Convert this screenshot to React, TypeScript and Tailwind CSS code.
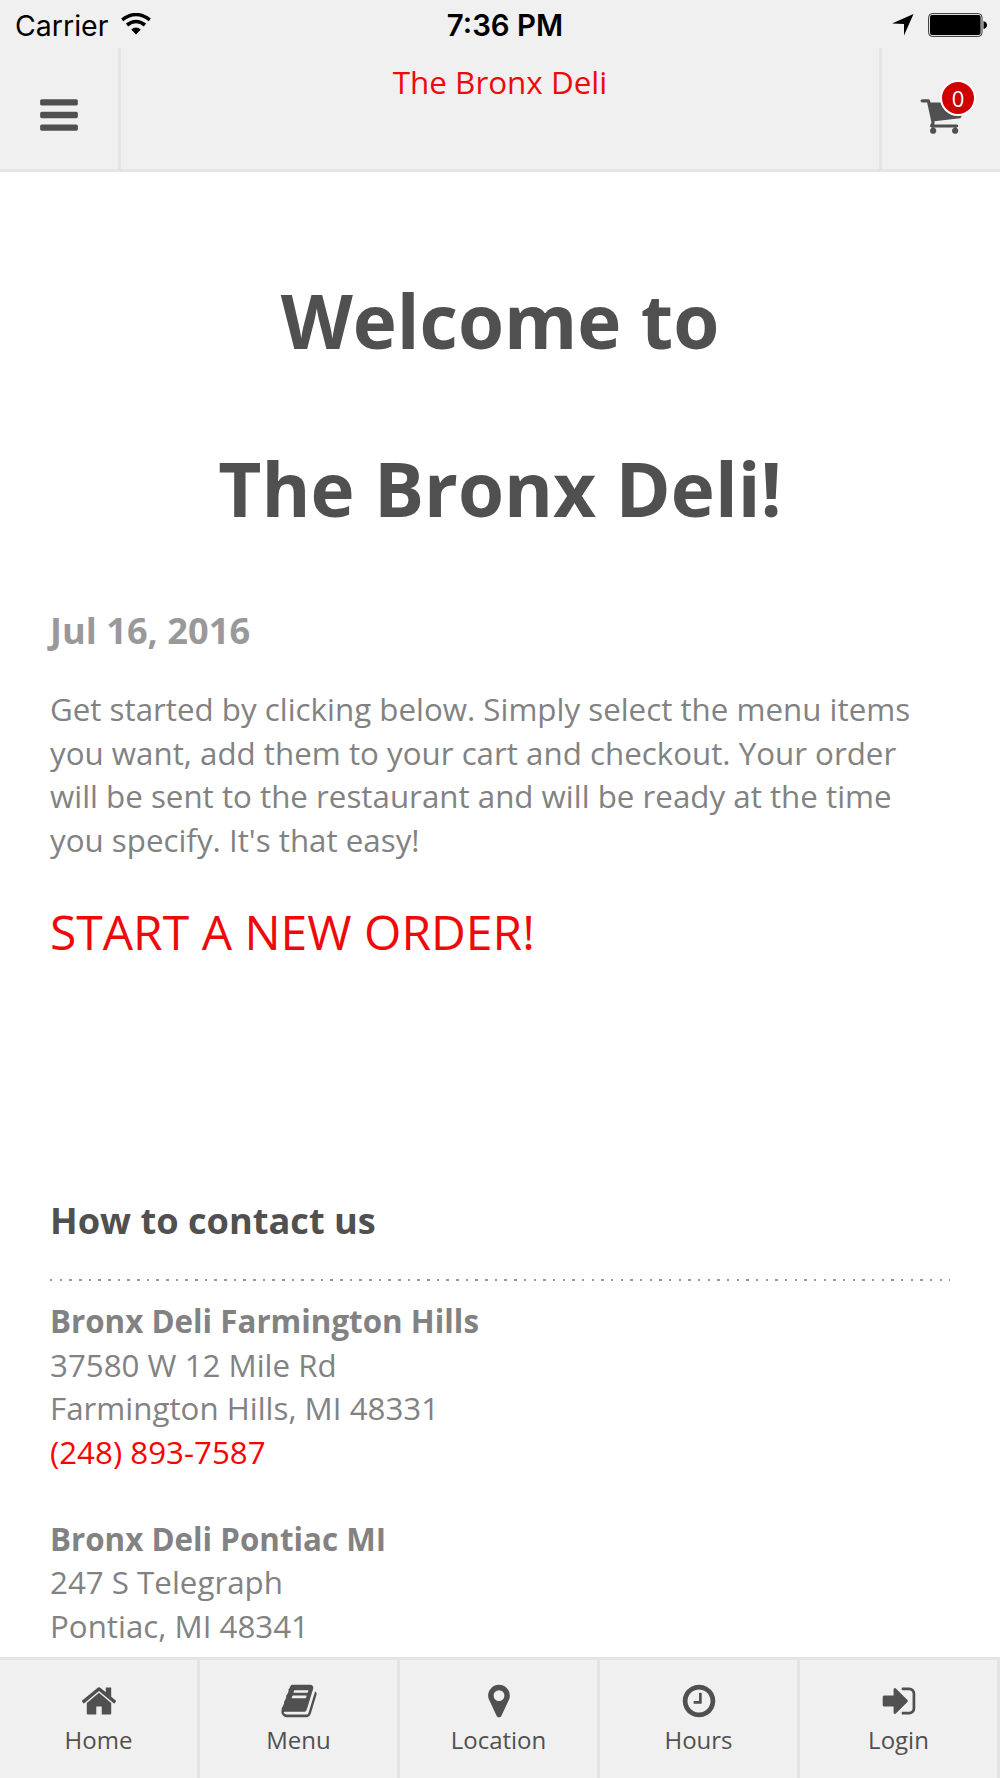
const icons = {
  bars: "M1664 1344v128q0 26-19 45t-45 19h-1408q-26 0-45-19t-19-45v-128q0-26 19-45t45-19h1408q26 0 45 19t19 45zm0-512v128q0 26-19 45t-45 19h-1408q-26 0-45-19t-19-45v-128q0-26 19-45t45-19h1408q26 0 45 19t19 45zm0-512v128q0 26-19 45t-45 19h-1408q-26 0-45-19t-19-45v-128q0-26 19-45t45-19h1408q26 0 45 19t19 45z",
  cart: "M704 1536q0 52-38 90t-90 38-90-38-38-90 38-90 90-38 90 38 38 90zm896 0q0 52-38 90t-90 38-90-38-38-90 38-90 90-38 90 38 38 90zm128-1088v512q0 24-16.5 42.5t-40.5 21.5l-1044 122q13 60 13 70 0 16-24 64h920q26 0 45 19t19 45-19 45-45 19h-1024q-26 0-45-19t-19-45q0-11 8-31.5t16-36 21.5-40 15.5-29.5l-177-823h-204q-26 0-45-19t-19-45 19-45 45-19h256q16 0 28.5 6.5t19.5 15.5 13 24.5 8 26 5.5 29.5 4.5 26h1201q26 0 45 19t19 45z",
  home: "M1472 992v480q0 26-19 45t-45 19h-384v-384h-256v384h-384q-26 0-45-19t-19-45v-480q0-1 .5-3t.5-3l575-474 575 474q1 2 1 6zm223-69l-62 74q-8 9-21 11h-3q-13 0-21-7l-692-577-692 577q-12 8-24 7-13-2-21-11l-62-74q-8-10-7-23.5t11-21.5l719-599q32-26 76-26t76 26l244 204v-195q0-14 9-23t23-9h192q14 0 23 9t9 23v408l219 182q10 8 11 21.5t-7 23.5z",
  book: "M1703 478q40 57 18 129l-275 906q-19 64-76.5 107.5t-122.5 43.5h-923q-77 0-148.5-53.5t-99.5-131.5q-24-67-2-127 0-4 3-27t4-37q1-8-3-21.5t-3-19.5q2-11 8-21t16.5-23.5 16.5-23.5q23-38 45-91.5t30-91.5q3-10 .5-30t-.5-28q3-11 17-28t17-23q21-36 42-92t25-90q1-9-2.5-32t.5-28q4-13 22-30.5t22-22.5q19-26 42.5-84.5t27.5-96.5q1-8-3-25.5t-2-26.5q2-8 9-18t18-23 17-21q8-12 16.5-30.5t15-35 16-36 19.5-32 26.5-23.5 36-11.5 47.5 5.5l-1 3q38-9 51-9h761q74 0 114 56t18 130l-274 906q-36 119-71.5 153.5t-128.5 34.5h-869q-27 0-38 15-11 16-1 43 24 70 144 70h923q29 0 56-15.5t35-41.5l300-987q7-22 5-57 38 15 59 43zm-1064 2q-4 13 2 22.5t20 9.5h608q13 0 25.5-9.5t16.5-22.5l21-64q4-13-2-22.5t-20-9.5h-608q-13 0-25.5 9.5t-16.5 22.5zm-83 256q-4 13 2 22.5t20 9.5h608q13 0 25.5-9.5t16.5-22.5l21-64q4-13-2-22.5t-20-9.5h-608q-13 0-25.5 9.5t-16.5 22.5z",
  marker: "M1152 640q0-106-75-181t-181-75-181 75-75 181 75 181 181 75 181-75 75-181zm256 0q0 109-33 179l-364 774q-16 33-47.5 52t-67.5 19-67.5-19-46.5-52l-365-774q-33-70-33-179 0-212 150-362t362-150 362 150 150 362z",
  clock: "M1024 544v448q0 14-9 23t-23 9h-320q-14 0-23-9t-9-23v-64q0-14 9-23t23-9h224v-352q0-14 9-23t23-9h64q14 0 23 9t9 23zm416 352q0-148-73-273t-198-198-273-73-273 73-198 198-73 273 73 273 198 198 273 73 273-73 198-198 73-273zm224 0q0 209-103 385.5t-279.5 279.5-385.5 103-385.5-103-279.5-279.5-103-385.5 103-385.5 279.5-279.5 385.5-103 385.5 103 279.5 279.5 103 385.5z",
  signIn: "M1312 896q0 26-19 45l-544 544q-19 19-45 19t-45-19-19-45v-288h-448q-26 0-45-19t-19-45v-384q0-26 19-45t45-19h448v-288q0-26 19-45t45-19 45 19l544 544q19 19 19 45zm352-352v704q0 119-84.5 203.5t-203.5 84.5h-320q-13 0-22.5-9.5t-9.5-22.5q0-4-1-20t-.5-26.5 3-23.5 10-19.5 20.5-6.5h320q66 0 113-47t47-113v-704q0-66-47-113t-113-47h-312l-11.5-1-11.5-3-8-5.5-7-9-2-13.5q0-4-1-20t-.5-26.5 3-23.5 10-19.5 20.5-6.5h320q119 0 203.5 84.5t84.5 203.5z",
};

function Icon({ name, size }: { name: keyof typeof icons; size: number }) {
  return (
    <svg width={size} height={size} viewBox="0 0 1792 1792" fill="currentColor" className="shrink-0">
      <path d={icons[name]} />
    </svg>
  );
}

const locations = [
  {
    name: "Bronx Deli Farmington Hills",
    street: "37580 W 12 Mile Rd",
    city: "Farmington Hills, MI 48331",
    phone: "(248) 893-7587",
  },
  {
    name: "Bronx Deli Pontiac MI",
    street: "247 S Telegraph",
    city: "Pontiac, MI 48341",
  },
];

const tabs: { label: string; icon: keyof typeof icons }[] = [
  { label: "Home", icon: "home" },
  { label: "Menu", icon: "book" },
  { label: "Location", icon: "marker" },
  { label: "Hours", icon: "clock" },
  { label: "Login", icon: "signIn" },
];

export default function App() {
  return (
    <div className="flex h-[1778px] w-[1000px] flex-col overflow-hidden bg-white font-['Open_Sans',sans-serif] text-[#828282]">
      {/* Status Bar */}
      <div className="grid h-12 shrink-0 grid-cols-3 items-center bg-[#f0f0f0] pt-1 pr-[13px] pl-[15px] font-['Inter',sans-serif] text-[28.5px] leading-[44px] text-black">
        <div className="flex items-center gap-[13px]">
          <span>Carrier</span>
          <svg width="30" height="22" viewBox="0 0 30 22" className="mb-1">
            <path d="M1.2 6.8Q15-3.6 28.8 6.8" fill="none" stroke="#000" strokeWidth="3.4" />
            <path d="M6 12Q15 5 24 12" fill="none" stroke="#000" strokeWidth="3.6" />
            <path d="M10.2 16.6Q15 12.2 19.8 16.6L15 21.4Z" />
          </svg>
        </div>
        <span className="pl-2 text-center text-[29.4px] font-semibold">7:36 PM</span>
        <div className="mb-0.5 flex items-center justify-end gap-3.5">
          <svg width="22" height="22" viewBox="0 0 22 22">
            <path d="M21.5 0L12 21.5V10L0 9.5Z" />
          </svg>
          <svg width="59" height="24" viewBox="0 0 59 24">
            <rect x="0.6" y="0.6" width="53.4" height="22.8" rx="3.6" fill="none" stroke="#333" />
            <rect x="2" y="2" width="50.6" height="20" rx="2" />
            <path d="M55.5 8q3.5 1 3.5 4t-3.5 4z" />
          </svg>
        </div>
      </div>

      {/* Header */}
      <header className="flex h-[124px] shrink-0 border-b-[3px] border-[#e4e4e4] bg-[#f0f0f0]">
        <button className="flex w-[121px] items-center justify-center border-r-[3px] border-[#e4e4e4] pt-3 text-[#505050]">
          <Icon name="bars" size={44} />
        </button>
        <div className="flex-1 pt-[11px] text-center text-[31.4px] leading-[45px] text-[#ee0a0a]">The Bronx Deli</div>
        <button className="flex w-[121px] items-center justify-center border-l-[3px] border-[#e4e4e4] pt-3 text-[#505050]">
          <span className="relative">
            <Icon name="cart" size={44} />
            <span className="absolute -top-[13px] left-[21px] flex size-9 items-center justify-center rounded-full border-2 border-white bg-[#d00000] text-[22px] leading-none text-white">
              0
            </span>
          </span>
        </button>
      </header>

      {/* Content */}
      <main className="flex-1 overflow-hidden px-[50px]">
        <h1 className="mt-[88px] text-center text-[74.6px] leading-[120px] font-bold text-[#505050]">Welcome to</h1>
        <h1 className="mt-12 text-center text-[74.6px] leading-[120px] font-bold text-[#505050]">The Bronx Deli!</h1>
        <h3 className="mt-[57px] text-[36.2px] leading-[50px] font-bold text-[#999]">Jul 16, 2016</h3>
        <p className="mt-[33px] text-[31.3px] leading-[43.5px]">
          Get started by clicking below. Simply select the menu items
          <br />
          you want, add them to your cart and checkout. Your order
          <br />
          will be sent to the restaurant and will be ready at the time
          <br />
          you specify. It's that easy!
        </p>
        <a className="mt-[37px] block text-[48px] leading-[66px] text-[#ee0a0a]">START A NEW ORDER!</a>
        <h2 className="mt-[230px] text-[36.2px] leading-[50px] font-bold text-[#505050]">How to contact us</h2>
        <div className="mt-[34px] mb-[19px] h-[2px] bg-[repeating-linear-gradient(to_right,#999_0_2.5px,transparent_2.5px_9.67px)]" />
        <div className="flex flex-col gap-[43.5px] text-[31.3px] leading-[43.5px]">
          {locations.map((location) => (
            <div key={location.name}>
              <div className="font-bold">{location.name}</div>
              <div>{location.street}</div>
              <div>{location.city}</div>
              {location.phone && <div className="text-[#ff0000]">{location.phone}</div>}
            </div>
          ))}
        </div>
      </main>

      {/* Tab Bar */}
      <nav className="grid h-[121px] shrink-0 grid-cols-5 border-t-[3px] border-[#e4e4e4] bg-[#f0f0f0]">
        {tabs.map((tab) => (
          <button
            key={tab.label}
            className="flex flex-col items-center gap-1 border-r-[3px] border-[#e4e4e4] pt-[22px] text-2xl text-[#505050]"
          >
            <Icon name={tab.icon} size={38} />
            {tab.label}
          </button>
        ))}
      </nav>
    </div>
  );
}
